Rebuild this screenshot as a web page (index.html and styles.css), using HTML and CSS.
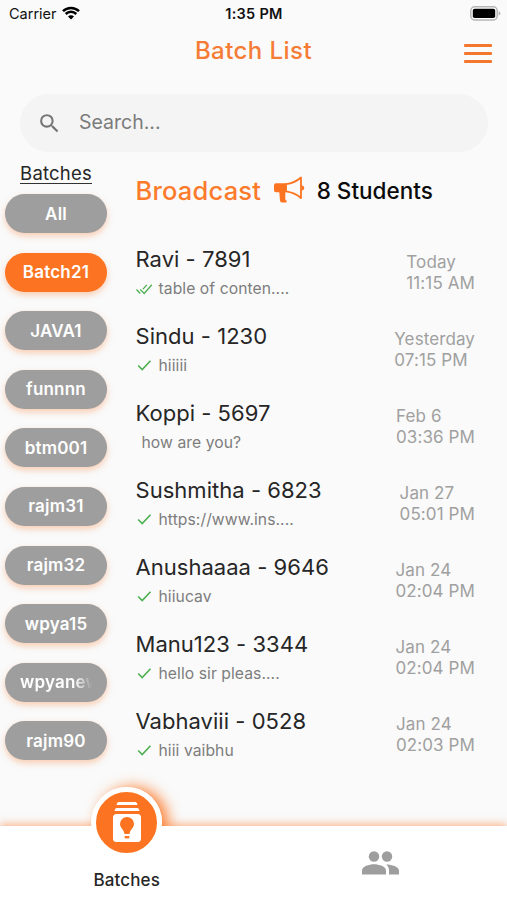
FILE: index.html
```
<!DOCTYPE html>
<html lang="en">
<head>
    <meta charset="UTF-8">
    <meta name="viewport" content="width=device-width, initial-scale=1.0">
    <title>Batch List</title>
    <link rel="stylesheet" href="styles.css">
</head>
<body>

    <div class="status-bar">
        <div class="carrier">
            <span>Carrier</span>
            <svg class="wifi" viewBox="0 0 18 14">
                <path d="M1 5.2a11.4 11.4 0 0 1 16 0" />
                <path d="M3.7 8a7.5 7.5 0 0 1 10.6 0" />
                <path class="wifi-dot" d="M9 13.6L6 10.6a4.2 4.2 0 0 1 6 0z" />
            </svg>
        </div>
        <div class="clock">1:35 PM</div>
        <svg class="battery" viewBox="0 0 31 15">
            <rect x="0.8" y="0.8" width="26.4" height="13.2" rx="4" fill="#fff" stroke="#b5b5b5" stroke-width="1.5" />
            <rect x="2.8" y="2.8" width="22.4" height="9.2" rx="1.8" fill="#000" />
            <path d="M28.6 5.2q1.8 .6 1.8 2.2t-1.8 2.2z" fill="#b5b5b5" />
        </svg>
    </div>

    <header class="header">
        <h1 class="title">Batch List</h1>
        <button class="menu-button" aria-label="Menu">
            <span></span>
            <span></span>
            <span></span>
        </button>
    </header>

    <div class="search">
        <svg class="search-icon" viewBox="0 0 24 24">
            <path d="M15.5 14h-.79l-.28-.27A6.47 6.47 0 0 0 16 9.5 6.5 6.5 0 1 0 9.5 16c1.61 0 3.09-.59 4.23-1.57l.27.28v.79l5 4.99L20.49 19l-4.99-5zm-6 0C7.01 14 5 11.99 5 9.5S7.01 5 9.5 5 14 7.01 14 9.5 11.99 14 9.5 14z" />
        </svg>
        <span class="search-text">Search...</span>
    </div>

    <main class="content">
        <aside class="sidebar">
            <h2 class="sidebar-title">Batches</h2>
            <div class="batch-list">
                <button class="batch">All</button>
                <button class="batch active">Batch21</button>
                <button class="batch">JAVA1</button>
                <button class="batch">funnnn</button>
                <button class="batch">btm001</button>
                <button class="batch">rajm31</button>
                <button class="batch">rajm32</button>
                <button class="batch">wpya15</button>
                <button class="batch"><span class="fade">wpyanew</span></button>
                <button class="batch">rajm90</button>
            </div>
        </aside>

        <section class="chats">
            <div class="broadcast">
                <span class="broadcast-title">Broadcast</span>
                <svg class="megaphone" viewBox="0 0 32 28">
                    <path class="horn" d="M13 8.200C19 7.400 24 5 28 1.500v20.500C24 18.500 19 16.200 13 15.400z" />
                    <path class="body" d="M3 7.200H13.500V16.300H12.300V23q0 1.200 1.200 1.600v1.900H9Q7.200 26.500 7 24.500L6.300 16.300H3Q1 16.300 1 14.300V9.200Q1 7.200 3 7.200z" />
                    <path class="body" d="M28.500 9q2.800 1 2.800 2.900t-2.800 2.900z" />
                </svg>
                <span class="student-count">8 Students</span>
            </div>

            <div class="chat">
                <div class="chat-info">
                    <div class="name">Ravi - 7891</div>
                    <div class="message">
                        <svg class="check double" viewBox="0 0 17 14"><path d="M.5 7.500l3.700 4M4.300 7.500l3.900 4L15.800 2.800M10.800 2.800L7 7.200" /></svg>
                        <span>table of conten....</span>
                    </div>
                </div>
                <div class="time">Today<br>11:15 AM</div>
            </div>
            <div class="chat">
                <div class="chat-info">
                    <div class="name">Sindu - 1230</div>
                    <div class="message">
                        <svg class="check" viewBox="0 0 17 14"><path d="M2.200 7.500l4 4L14.500 2.800" /></svg>
                        <span>hiiiii</span>
                    </div>
                </div>
                <div class="time">Yesterday<br>07:15 PM</div>
            </div>
            <div class="chat">
                <div class="chat-info">
                    <div class="name">Koppi - 5697</div>
                    <div class="message received">
                        <span>how are you?</span>
                    </div>
                </div>
                <div class="time">Feb 6<br>03:36 PM</div>
            </div>
            <div class="chat">
                <div class="chat-info">
                    <div class="name">Sushmitha - 6823</div>
                    <div class="message">
                        <svg class="check" viewBox="0 0 17 14"><path d="M2.200 7.500l4 4L14.500 2.800" /></svg>
                        <span>https://www.ins....</span>
                    </div>
                </div>
                <div class="time">Jan 27<br>05:01 PM</div>
            </div>
            <div class="chat">
                <div class="chat-info">
                    <div class="name">Anushaaaa - 9646</div>
                    <div class="message">
                        <svg class="check" viewBox="0 0 17 14"><path d="M2.200 7.500l4 4L14.500 2.800" /></svg>
                        <span>hiiucav</span>
                    </div>
                </div>
                <div class="time">Jan 24<br>02:04 PM</div>
            </div>
            <div class="chat">
                <div class="chat-info">
                    <div class="name">Manu123 - 3344</div>
                    <div class="message">
                        <svg class="check" viewBox="0 0 17 14"><path d="M2.200 7.500l4 4L14.500 2.800" /></svg>
                        <span>hello sir pleas....</span>
                    </div>
                </div>
                <div class="time">Jan 24<br>02:04 PM</div>
            </div>
            <div class="chat">
                <div class="chat-info">
                    <div class="name">Vabhaviii - 0528</div>
                    <div class="message">
                        <svg class="check" viewBox="0 0 17 14"><path d="M2.200 7.500l4 4L14.500 2.800" /></svg>
                        <span>hiii vaibhu</span>
                    </div>
                </div>
                <div class="time">Jan 24<br>02:03 PM</div>
            </div>
        </section>
    </main>

    <nav class="bottom-nav">
        <div class="nav-item">
            <div class="nav-circle">
                <svg class="batches-icon" viewBox="0 0 28 40">
                    <path d="M5.500 0h17q1.500 0 2 3H3.500q.5-3 2-3zM3.500 6h21q1.500 0 2 3H1.500q.5-3 2-3z" fill="#fff" />
                    <rect x="0" y="12" width="28" height="28" rx="3.500" fill="#fff" />
                    <path d="M14 15a7 7 0 0 0-7 7c0 4 4 5.500 4.500 10h5c.5-4.500 4.500-6 4.500-10a7 7 0 0 0-7-7z" fill="#fc7421" />
                    <rect x="11.700" y="34" width="4.600" height="2.400" fill="#fc7421" />
                </svg>
            </div>
            <span class="nav-label">Batches</span>
        </div>
        <div class="nav-item people">
            <svg class="people-icon" viewBox="0 0 37 24">
                <circle cx="12" cy="5.500" r="5.200" />
                <circle cx="25" cy="5.500" r="5.200" />
                <path d="M0 23.500v-4C0 15.500 7 13.300 12 13.300s12 2.200 12 6.200v4z" />
                <path d="M24.200 13.400c5.500 0 12.800 2.100 12.800 6.100v4H27v-4c0-2.700-1-4.600-2.800-6.100z" />
            </svg>
        </div>
    </nav>

</body>
</html>
```
FILE: styles.css
```
* {
    box-sizing: border-box;
}

body {
    font-family: Inter, "Liberation Sans", sans-serif;
    display: flex;
    flex-direction: column;
    width: 507px;
    height: 900px;
    margin: 0;
    background: #fafafa;
    color: #262626;
    overflow: hidden;
}

h1,
h2 {
    margin: 0;
}

button {
    font-family: inherit;
    border: none;
    padding: 0;
    cursor: pointer;
}

.status-bar {
    display: grid;
    grid-template-columns: 1fr auto 1fr;
    align-items: center;
    height: 27px;
    padding: 0 6px 0 9px;
    font-size: 14.5px;
    flex-shrink: 0;
    color: #111;
}

.carrier {
    display: flex;
    align-items: center;
    gap: 5px;
}

.wifi {
    width: 18px;
    height: 14px;
    margin-top: -2px;
    fill: none;
    stroke: #000;
    stroke-width: 2.5;
}

.wifi-dot {
    fill: #000;
    stroke: none;
}

.clock {
    font-weight: 600;
    font-size: 14.5px;
    letter-spacing: 0.3px;
    margin-right: 2px;
}

.battery {
    width: 31px;
    height: 15px;
    justify-self: end;
}

.header {
    display: grid;
    grid-template-columns: 1fr auto 1fr;
    align-items: center;
    height: 46px;
    padding: 0 15px;
    flex-shrink: 0;
}

.title {
    grid-column: 2;
    font-size: 24px;
    font-weight: 500;
    letter-spacing: 0.45px;
    color: #f57c35;
}

.menu-button {
    display: flex;
    flex-direction: column;
    justify-self: end;
    gap: 5px;
    width: 28px;
    margin-top: 7px;
    background: none;
}

.menu-button span {
    height: 2.7px;
    border-radius: 1px;
    background: #f4772e;
}

.search {
    display: flex;
    align-items: center;
    height: 58px;
    margin: 21px 19px 0 20px;
    padding-left: 17px;
    border-radius: 29px;
    background: #f4f4f4;
    flex-shrink: 0;
}

.search-icon {
    width: 25px;
    height: 25px;
    fill: #757575;
}

.search-text {
    margin: 0 0 2px 17px;
    font-size: 19.5px;
    color: #7b7b7b;
}

.content {
    display: flex;
    height: 674px;
    flex-shrink: 0;
}

.sidebar {
    width: 112px;
    padding: 11px 5px 0;
}

.sidebar-title {
    width: max-content;
    margin: 0 auto;
    font-size: 18.5px;
    font-weight: 400;
    line-height: 20px;
    letter-spacing: 0.2px;
    border-bottom: 1.5px solid #333;
}

.batch-list {
    display: flex;
    flex-direction: column;
    gap: 19.6px;
    margin-top: 10px;
}

.batch {
    width: 102px;
    height: 39px;
    border-radius: 20px;
    background: #9e9e9e;
    color: #fff;
    font-size: 17px;
    font-weight: 600;
    letter-spacing: 0.2px;
    box-shadow: 0 3px 6px rgba(244, 119, 46, 0.35);
}

.batch.active {
    background: #fc7421;
}

/* long names fade out at the right edge of the pill */
.fade {
    display: block;
    width: 72px;
    margin: 0 auto;
    overflow: hidden;
    white-space: nowrap;
    mask-image: linear-gradient(to right, #000 75%, transparent);
}

.chats {
    flex: 1;
    padding: 18px 32px 0 23.5px;
}

.broadcast {
    display: flex;
    align-items: center;
    height: 40px;
    margin-bottom: 35px;
}

.broadcast-title {
    font-size: 25.5px;
    font-weight: 500;
    letter-spacing: 0.2px;
    color: #fc7a2c;
}

.megaphone {
    width: 32px;
    height: 28px;
    margin: 0 12px 0 11.5px;
}

.horn {
    fill: none;
    stroke: #fc7421;
    stroke-width: 1.8;
    stroke-linejoin: round;
}

.body {
    fill: #fc7421;
}

.student-count {
    font-size: 22.5px;
    font-weight: 500;
    color: #0c0c0c;
}

.chat {
    display: flex;
    justify-content: space-between;
    height: 76.95px;
}

.name {
    font-size: 22px;
    line-height: 28px;
    letter-spacing: 0.03px;
}

.message {
    display: flex;
    align-items: center;
    height: 20px;
    margin-top: 5.5px;
    font-size: 15.7px;
    letter-spacing: 0.06px;
    color: #7d7d7d;
}

.message.received {
    padding-left: 6px;
}

.check {
    width: 17px;
    height: 14px;
    margin-right: 6px;
    fill: none;
    stroke: #4caf50;
    stroke-width: 1.6;
}

.double {
    stroke-width: 1.3;
}

.time {
    padding-top: 7px;
    font-size: 17px;
    line-height: 21px;
    letter-spacing: 0.1px;
    color: #a0a0a0;
}

.bottom-nav {
    position: relative;
    display: flex;
    flex: 1;
    background: #fff;
    box-shadow: 0 -2px 8px rgba(252, 116, 33, 0.5);
}

/* glow of the round button, only seen above the bar */
.bottom-nav::before {
    content: "";
    position: absolute;
    z-index: -1;
    top: -39px;
    left: 92px;
    width: 70px;
    height: 70px;
    border-radius: 50%;
    box-shadow: 6px 0 14px rgba(252, 116, 33, 0.9);
}

.nav-item {
    display: flex;
    flex-direction: column;
    align-items: center;
    width: 50%;
}

.nav-circle {
    display: flex;
    justify-content: center;
    align-items: center;
    width: 71px;
    height: 71px;
    margin-top: -39.5px;
    border: 5px solid #fff;
    border-radius: 50%;
    background: #fc7421;
}

.batches-icon {
    width: 28px;
    height: 40px;
}

.nav-label {
    margin-top: 12px;
    font-size: 17px;
    font-weight: 500;
    letter-spacing: 0.1px;
}

.people {
    padding-top: 25px;
}

.people-icon {
    width: 37px;
    height: 24px;
    fill: #9e9e9e;
}
```
